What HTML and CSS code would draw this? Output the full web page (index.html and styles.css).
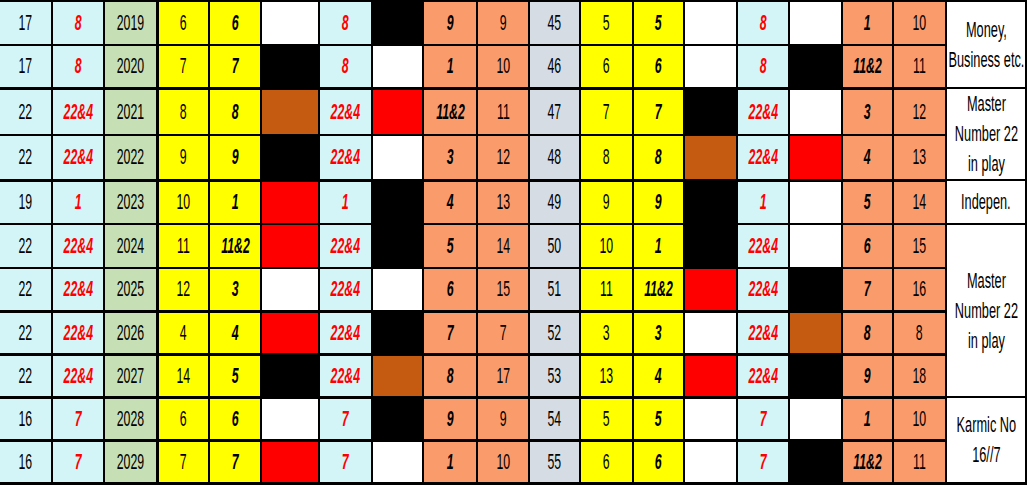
FILE: index.html
```html
<!DOCTYPE html>
<html lang="en">
<head>
<meta charset="utf-8">
<title>Numerology table</title>
<link rel="stylesheet" href="styles.css">
</head>
<body>
<table class="grid">
<colgroup>
<col class="w52"><col class="w52"><col class="w53"><col class="w52"><col class="w52"><col class="w58"><col class="w53"><col class="w51"><col class="w54"><col class="w52"><col class="w51"><col class="w53"><col class="w51"><col class="w53"><col class="w52"><col class="w53"><col class="w51"><col class="w53"><col class="w80">
</colgroup>
<tbody>
<tr>
<td class="c"><span class="t">17</span></td><td class="c rd"><span class="t">8</span></td><td class="g"><span class="t">2019</span></td><td class="y"><span class="t">6</span></td><td class="y bi"><span class="t">6</span></td><td class="w"></td><td class="c rd"><span class="t">8</span></td><td class="k"></td><td class="o bi"><span class="t">9</span></td><td class="o"><span class="t">9</span></td><td class="s"><span class="t">45</span></td><td class="y"><span class="t">5</span></td><td class="y bi"><span class="t">5</span></td><td class="w"></td><td class="c rd"><span class="t">8</span></td><td class="w"></td><td class="o bi"><span class="t">1</span></td><td class="o"><span class="t">10</span></td>
<td class="note" rowspan="2"><span class="t">Money,<br>Business etc.</span></td>
</tr>
<tr class="thick">
<td class="c"><span class="t">17</span></td><td class="c rd"><span class="t">8</span></td><td class="g"><span class="t">2020</span></td><td class="y"><span class="t">7</span></td><td class="y bi"><span class="t">7</span></td><td class="k"></td><td class="c rd"><span class="t">8</span></td><td class="w"></td><td class="o bi"><span class="t">1</span></td><td class="o"><span class="t">10</span></td><td class="s"><span class="t">46</span></td><td class="y"><span class="t">6</span></td><td class="y bi"><span class="t">6</span></td><td class="w"></td><td class="c rd"><span class="t">8</span></td><td class="k"></td><td class="o bi"><span class="t">11&amp;2</span></td><td class="o"><span class="t">11</span></td>
</tr>
<tr>
<td class="c"><span class="t">22</span></td><td class="c rd"><span class="t">22&amp;4</span></td><td class="g"><span class="t">2021</span></td><td class="y"><span class="t">8</span></td><td class="y bi"><span class="t">8</span></td><td class="b"></td><td class="c rd"><span class="t">22&amp;4</span></td><td class="r"></td><td class="o bi"><span class="t">11&amp;2</span></td><td class="o"><span class="t">11</span></td><td class="s"><span class="t">47</span></td><td class="y"><span class="t">7</span></td><td class="y bi"><span class="t">7</span></td><td class="k"></td><td class="c rd"><span class="t">22&amp;4</span></td><td class="w"></td><td class="o bi"><span class="t">3</span></td><td class="o"><span class="t">12</span></td>
<td class="note" rowspan="2"><span class="t">Master<br>Number 22<br>in play</span></td>
</tr>
<tr class="thick">
<td class="c"><span class="t">22</span></td><td class="c rd"><span class="t">22&amp;4</span></td><td class="g"><span class="t">2022</span></td><td class="y"><span class="t">9</span></td><td class="y bi"><span class="t">9</span></td><td class="k"></td><td class="c rd"><span class="t">22&amp;4</span></td><td class="w"></td><td class="o bi"><span class="t">3</span></td><td class="o"><span class="t">12</span></td><td class="s"><span class="t">48</span></td><td class="y"><span class="t">8</span></td><td class="y bi"><span class="t">8</span></td><td class="b"></td><td class="c rd"><span class="t">22&amp;4</span></td><td class="r"></td><td class="o bi"><span class="t">4</span></td><td class="o"><span class="t">13</span></td>
</tr>
<tr>
<td class="c"><span class="t">19</span></td><td class="c rd"><span class="t">1</span></td><td class="g"><span class="t">2023</span></td><td class="y"><span class="t">10</span></td><td class="y bi"><span class="t">1</span></td><td class="r"></td><td class="c rd"><span class="t">1</span></td><td class="k"></td><td class="o bi"><span class="t">4</span></td><td class="o"><span class="t">13</span></td><td class="s"><span class="t">49</span></td><td class="y"><span class="t">9</span></td><td class="y bi"><span class="t">9</span></td><td class="k"></td><td class="c rd"><span class="t">1</span></td><td class="w"></td><td class="o bi"><span class="t">5</span></td><td class="o"><span class="t">14</span></td>
<td class="note"><span class="t">Indepen.</span></td>
</tr>
<tr>
<td class="c"><span class="t">22</span></td><td class="c rd"><span class="t">22&amp;4</span></td><td class="g"><span class="t">2024</span></td><td class="y"><span class="t">11</span></td><td class="y bi"><span class="t">11&amp;2</span></td><td class="r"></td><td class="c rd"><span class="t">22&amp;4</span></td><td class="k"></td><td class="o bi"><span class="t">5</span></td><td class="o"><span class="t">14</span></td><td class="s"><span class="t">50</span></td><td class="y"><span class="t">10</span></td><td class="y bi"><span class="t">1</span></td><td class="k"></td><td class="c rd"><span class="t">22&amp;4</span></td><td class="w"></td><td class="o bi"><span class="t">6</span></td><td class="o"><span class="t">15</span></td>
<td class="note" rowspan="4"><span class="t">Master<br>Number 22<br>in play</span></td>
</tr>
<tr class="thick">
<td class="c"><span class="t">22</span></td><td class="c rd"><span class="t">22&amp;4</span></td><td class="g"><span class="t">2025</span></td><td class="y"><span class="t">12</span></td><td class="y bi"><span class="t">3</span></td><td class="w"></td><td class="c rd"><span class="t">22&amp;4</span></td><td class="w"></td><td class="o bi"><span class="t">6</span></td><td class="o"><span class="t">15</span></td><td class="s"><span class="t">51</span></td><td class="y"><span class="t">11</span></td><td class="y bi"><span class="t">11&amp;2</span></td><td class="r"></td><td class="c rd"><span class="t">22&amp;4</span></td><td class="k"></td><td class="o bi"><span class="t">7</span></td><td class="o"><span class="t">16</span></td>
</tr>
<tr class="thick">
<td class="c"><span class="t">22</span></td><td class="c rd"><span class="t">22&amp;4</span></td><td class="g"><span class="t">2026</span></td><td class="y"><span class="t">4</span></td><td class="y bi"><span class="t">4</span></td><td class="r"></td><td class="c rd"><span class="t">22&amp;4</span></td><td class="k"></td><td class="o bi"><span class="t">7</span></td><td class="o"><span class="t">7</span></td><td class="s"><span class="t">52</span></td><td class="y"><span class="t">3</span></td><td class="y bi"><span class="t">3</span></td><td class="w"></td><td class="c rd"><span class="t">22&amp;4</span></td><td class="b"></td><td class="o bi"><span class="t">8</span></td><td class="o"><span class="t">8</span></td>
</tr>
<tr class="thick">
<td class="c"><span class="t">22</span></td><td class="c rd"><span class="t">22&amp;4</span></td><td class="g"><span class="t">2027</span></td><td class="y"><span class="t">14</span></td><td class="y bi"><span class="t">5</span></td><td class="k"></td><td class="c rd"><span class="t">22&amp;4</span></td><td class="b"></td><td class="o bi"><span class="t">8</span></td><td class="o"><span class="t">17</span></td><td class="s"><span class="t">53</span></td><td class="y"><span class="t">13</span></td><td class="y bi"><span class="t">4</span></td><td class="r"></td><td class="c rd"><span class="t">22&amp;4</span></td><td class="k"></td><td class="o bi"><span class="t">9</span></td><td class="o"><span class="t">18</span></td>
</tr>
<tr class="thick">
<td class="c"><span class="t">16</span></td><td class="c rd"><span class="t">7</span></td><td class="g"><span class="t">2028</span></td><td class="y"><span class="t">6</span></td><td class="y bi"><span class="t">6</span></td><td class="w"></td><td class="c rd"><span class="t">7</span></td><td class="k"></td><td class="o bi"><span class="t">9</span></td><td class="o"><span class="t">9</span></td><td class="s"><span class="t">54</span></td><td class="y"><span class="t">5</span></td><td class="y bi"><span class="t">5</span></td><td class="w"></td><td class="c rd"><span class="t">7</span></td><td class="w"></td><td class="o bi"><span class="t">1</span></td><td class="o"><span class="t">10</span></td>
<td class="note" rowspan="2"><span class="t">Karmic No<br>16//7</span></td>
</tr>
<tr class="thick">
<td class="c"><span class="t">16</span></td><td class="c rd"><span class="t">7</span></td><td class="g"><span class="t">2029</span></td><td class="y"><span class="t">7</span></td><td class="y bi"><span class="t">7</span></td><td class="r"></td><td class="c rd"><span class="t">7</span></td><td class="w"></td><td class="o bi"><span class="t">1</span></td><td class="o"><span class="t">10</span></td><td class="s"><span class="t">55</span></td><td class="y"><span class="t">6</span></td><td class="y bi"><span class="t">6</span></td><td class="w"></td><td class="c rd"><span class="t">7</span></td><td class="k"></td><td class="o bi"><span class="t">11&amp;2</span></td><td class="o"><span class="t">11</span></td>
</tr>
</tbody>
</table>
</body>
</html>
```

FILE: styles.css
```css
html, body {
  margin: 0;
  padding: 0;
  background: #ffffff;
}

.grid {
  border-collapse: collapse;
  table-layout: fixed;
  width: 1026px;
  font-family: "Liberation Sans", Arial, sans-serif;
  font-size: 22px;
  color: #000000;
}

.w51 { width: 51px; }
.w52 { width: 52px; }
.w53 { width: 53px; }
.w54 { width: 54px; }
.w58 { width: 58px; }
.w80 { width: 80px; }

.grid tr {
  height: 44px;
}

.grid tr.thick {
  height: 43px;
}

.grid td {
  border: 2px solid #000000;
  padding: 0;
  text-align: center;
  vertical-align: middle;
  white-space: nowrap;
}

.grid td:first-child {
  border-left: 0;
}

.grid tr.thick td {
  border-bottom-width: 3px;
}

.grid td.g {
  border-right-width: 3px;
}

.t {
  display: inline-block;
  margin: 0 -80px;
  transform: scaleX(0.56);
  line-height: 26px;
}

/* cell fills */
.c { background: #d4f5f8; }
.g { background: #c6dfb5; }
.y { background: #ffff00; }
.o { background: #fa9b6b; }
.s { background: #d6dce4; }
.w { background: #ffffff; }
.k { background: #000000; }
.b { background: #c55a11; }
.r { background: #ff0000; }

/* text styles */
.bi {
  font-weight: bold;
  font-style: italic;
}

.rd {
  font-weight: bold;
  font-style: italic;
  color: #ff0000;
}

.note {
  background: #ffffff;
}

.note .t {
  line-height: 30px;
  transform: scaleX(0.58);
}
```
